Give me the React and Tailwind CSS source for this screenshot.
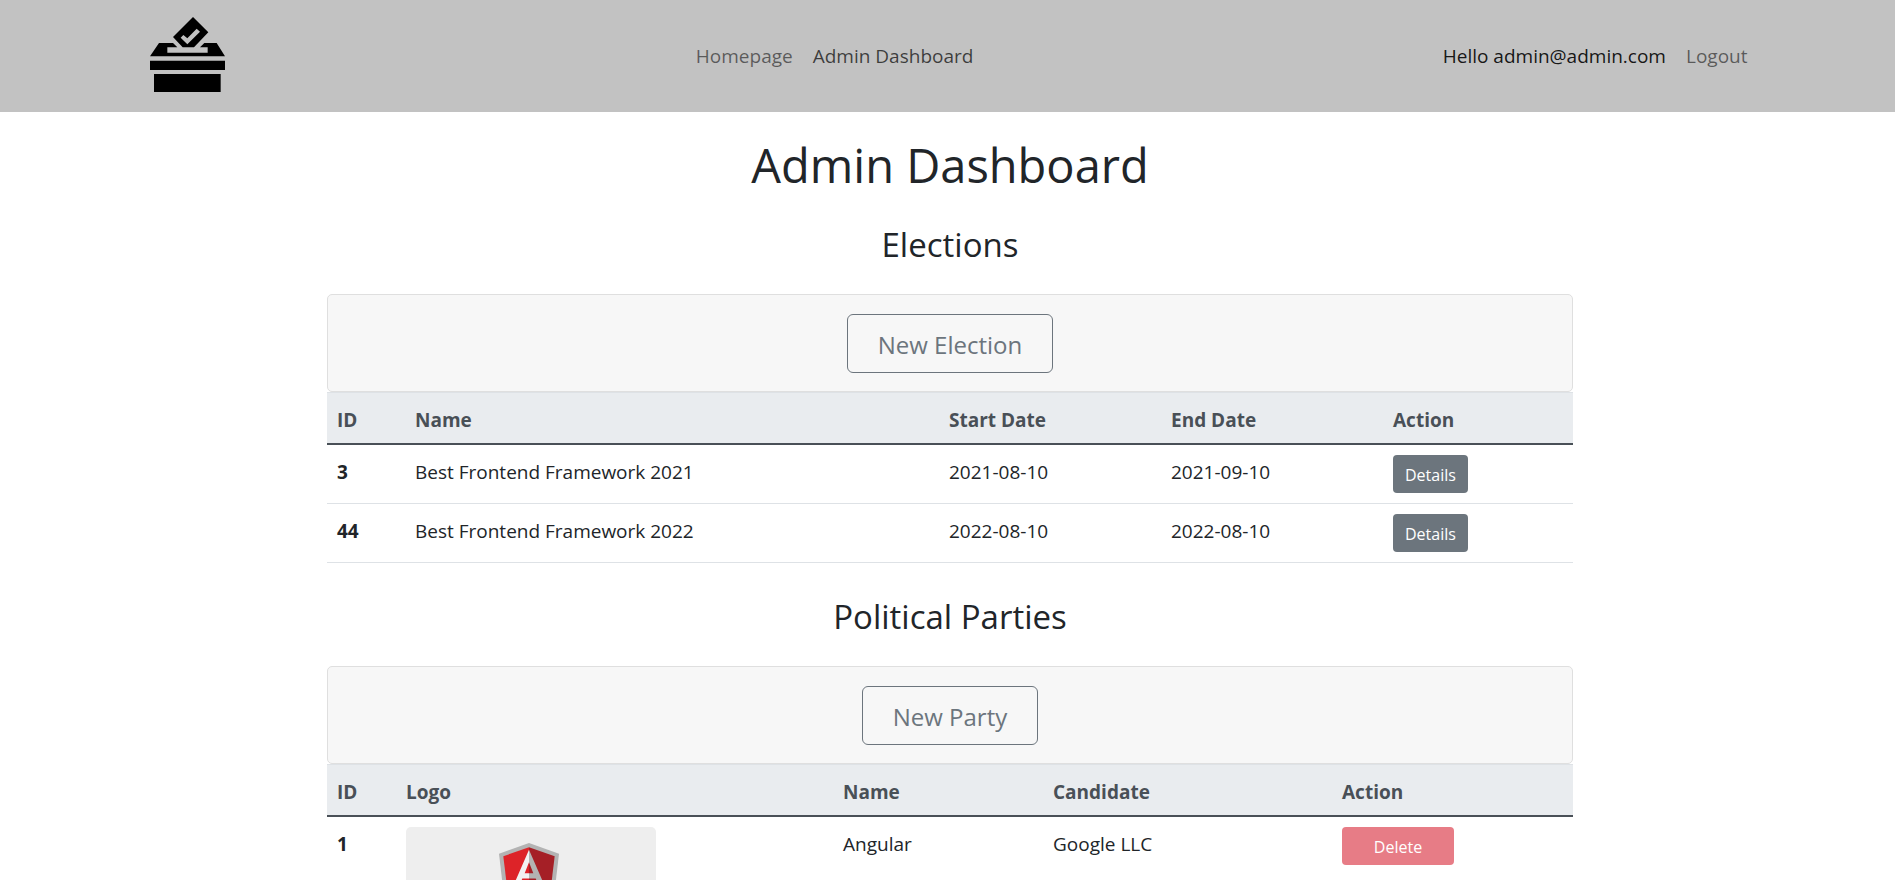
const elections = [
  { id: 3, name: "Best Frontend Framework 2021", start: "2021-08-10", end: "2021-09-10" },
  { id: 44, name: "Best Frontend Framework 2022", start: "2022-08-10", end: "2022-08-10" },
];

const parties = [{ id: 1, name: "Angular", candidate: "Google LLC" }];

function BallotBox() {
  return (
    <svg viewBox="0 0 225 225" className="size-[75px]" aria-hidden="true">
      <path
        fillRule="evenodd"
        d="M129 0L175 46L132 91H98L69 60ZM92 62L100 54L112 64L140 35L150 44L112 82Z"
      />
      <path d="M27 78H69L82 91H52V107H173V91H150L163 78H200L225 118H0Z" />
      <path d="M0 131H225V159H0Z" />
      <path d="M12 171H212V225H12Z" />
    </svg>
  );
}

function AngularLogo() {
  return (
    <svg viewBox="0 0 250 266" className="h-16 w-[60px]" role="img" aria-label="Angular">
      <path fill="#b3b3b3" d="M125 0L0 44L19 207L125 266L231 207L250 44Z" />
      <path fill="#dd2328" d="M125 17L18 55L35 195L125 245Z" />
      <path fill="#a51f26" d="M125 17L232 55L215 195L125 245Z" />
      <path fill="#f2f2f2" d="M125 28L58 182H84L97 148H125V126H107L125 80Z" />
      <path fill="#b3b3b3" d="M125 28L192 182H166L153 148H125V126H143L125 80Z" />
    </svg>
  );
}

function Section({ title, action, children }) {
  return (
    <section className="pb-[5px]">
      <h2 className="pt-7 pb-7 text-center text-[33px] leading-[42px]">{title}</h2>
      <div className="flex justify-center rounded-[5px] border border-[#dfdfdf] bg-[#f7f7f7] pt-[19px] pb-[18px]">
        <button
          type="button"
          className="rounded-md border border-[#6c757d] px-[30px] pt-[13px] pb-[11px] text-[24px] leading-[33px] text-[#6c757d]"
        >
          {action}
        </button>
      </div>
      {children}
    </section>
  );
}

function HeadRow({ columns }) {
  return (
    <thead className="border-t border-b-2 border-t-[#dee2e6] border-b-[#495057] bg-[#e9ecef] text-[#495057]">
      <tr>
        {columns.map((c) => (
          <th key={c} scope="col" className="px-[10px] pt-[12px] pb-[8px] font-bold leading-[30px]">
            {c}
          </th>
        ))}
      </tr>
    </thead>
  );
}

const textCell = "px-[10px] pt-[12px] pb-[8px] align-top";
const boxCell = "px-[10px] py-[10px] align-top";

export default function App() {
  return (
    <div className="bg-white font-['Open_Sans','Noto_Sans',sans-serif] text-[19px] leading-[30px] text-[#212529]">
      <header className="bg-[#c2c2c2]">
        <nav className="mx-auto flex h-28 max-w-[1650px] items-center justify-between px-[15px]">
          <a href="#home" aria-label="Home" className="px-3 pb-1 text-black">
            <BallotBox />
          </a>
          <div className="flex">
            <a href="#home" className="px-[10px] text-black/55">Homepage</a>
            <a href="#admin" className="px-[10px] text-black/70">Admin Dashboard</a>
          </div>
          <div className="flex">
            <span className="px-[10px] text-black/90">Hello admin@admin.com</span>
            <a href="#logout" className="px-[10px] text-black/55">Logout</a>
          </div>
        </nav>
      </header>
      <main className="pl-[5px]">
        <div className="mx-auto w-full max-w-[1246px]">
          <h1 className="pt-[23px] pb-px text-center text-[47px] leading-[60px]">Admin Dashboard</h1>

          <Section title="Elections" action="New Election">
            <table className="w-full table-fixed border-collapse text-left">
              <colgroup>
                <col className="w-[78px]" />
                <col />
                <col className="w-[222px]" />
                <col className="w-[222px]" />
                <col className="w-[190px]" />
              </colgroup>
              <HeadRow columns={["ID", "Name", "Start Date", "End Date", "Action"]} />
              <tbody>
                {elections.map((e) => (
                  <tr key={e.id} className="border-b border-[#dee2e6]">
                    <th scope="row" className={textCell}>{e.id}</th>
                    <td className={textCell}>{e.name}</td>
                    <td className={textCell}>{e.start}</td>
                    <td className={textCell}>{e.end}</td>
                    <td className={boxCell}>
                      <button
                        type="button"
                        className="block rounded bg-[#6c757d] px-3 pt-[5px] pb-[3px] text-[16px] leading-[30px] text-white"
                      >
                        Details
                      </button>
                    </td>
                  </tr>
                ))}
              </tbody>
            </table>
          </Section>

          <Section title="Political Parties" action="New Party">
            <table className="w-full table-fixed border-collapse text-left">
              <colgroup>
                <col className="w-[69px]" />
                <col />
                <col className="w-[210px]" />
                <col className="w-[289px]" />
                <col className="w-[241px]" />
              </colgroup>
              <HeadRow columns={["ID", "Logo", "Name", "Candidate", "Action"]} />
              <tbody>
                {parties.map((p) => (
                  <tr key={p.id} className="border-b border-[#dee2e6]">
                    <th scope="row" className={textCell}>{p.id}</th>
                    <td className={boxCell}>
                      <div className="flex w-[250px] justify-center rounded-[5px] bg-[#eeeeee] py-4 pr-1">
                        <AngularLogo />
                      </div>
                    </td>
                    <td className={textCell}>{p.name}</td>
                    <td className={textCell}>{p.candidate}</td>
                    <td className={boxCell}>
                      <button
                        type="button"
                        className="block w-28 rounded bg-[#e77c86] pt-[5px] pb-[3px] text-center text-[16px] leading-[30px] text-white"
                      >
                        Delete
                      </button>
                    </td>
                  </tr>
                ))}
              </tbody>
            </table>
          </Section>
        </div>
      </main>
    </div>
  );
}
